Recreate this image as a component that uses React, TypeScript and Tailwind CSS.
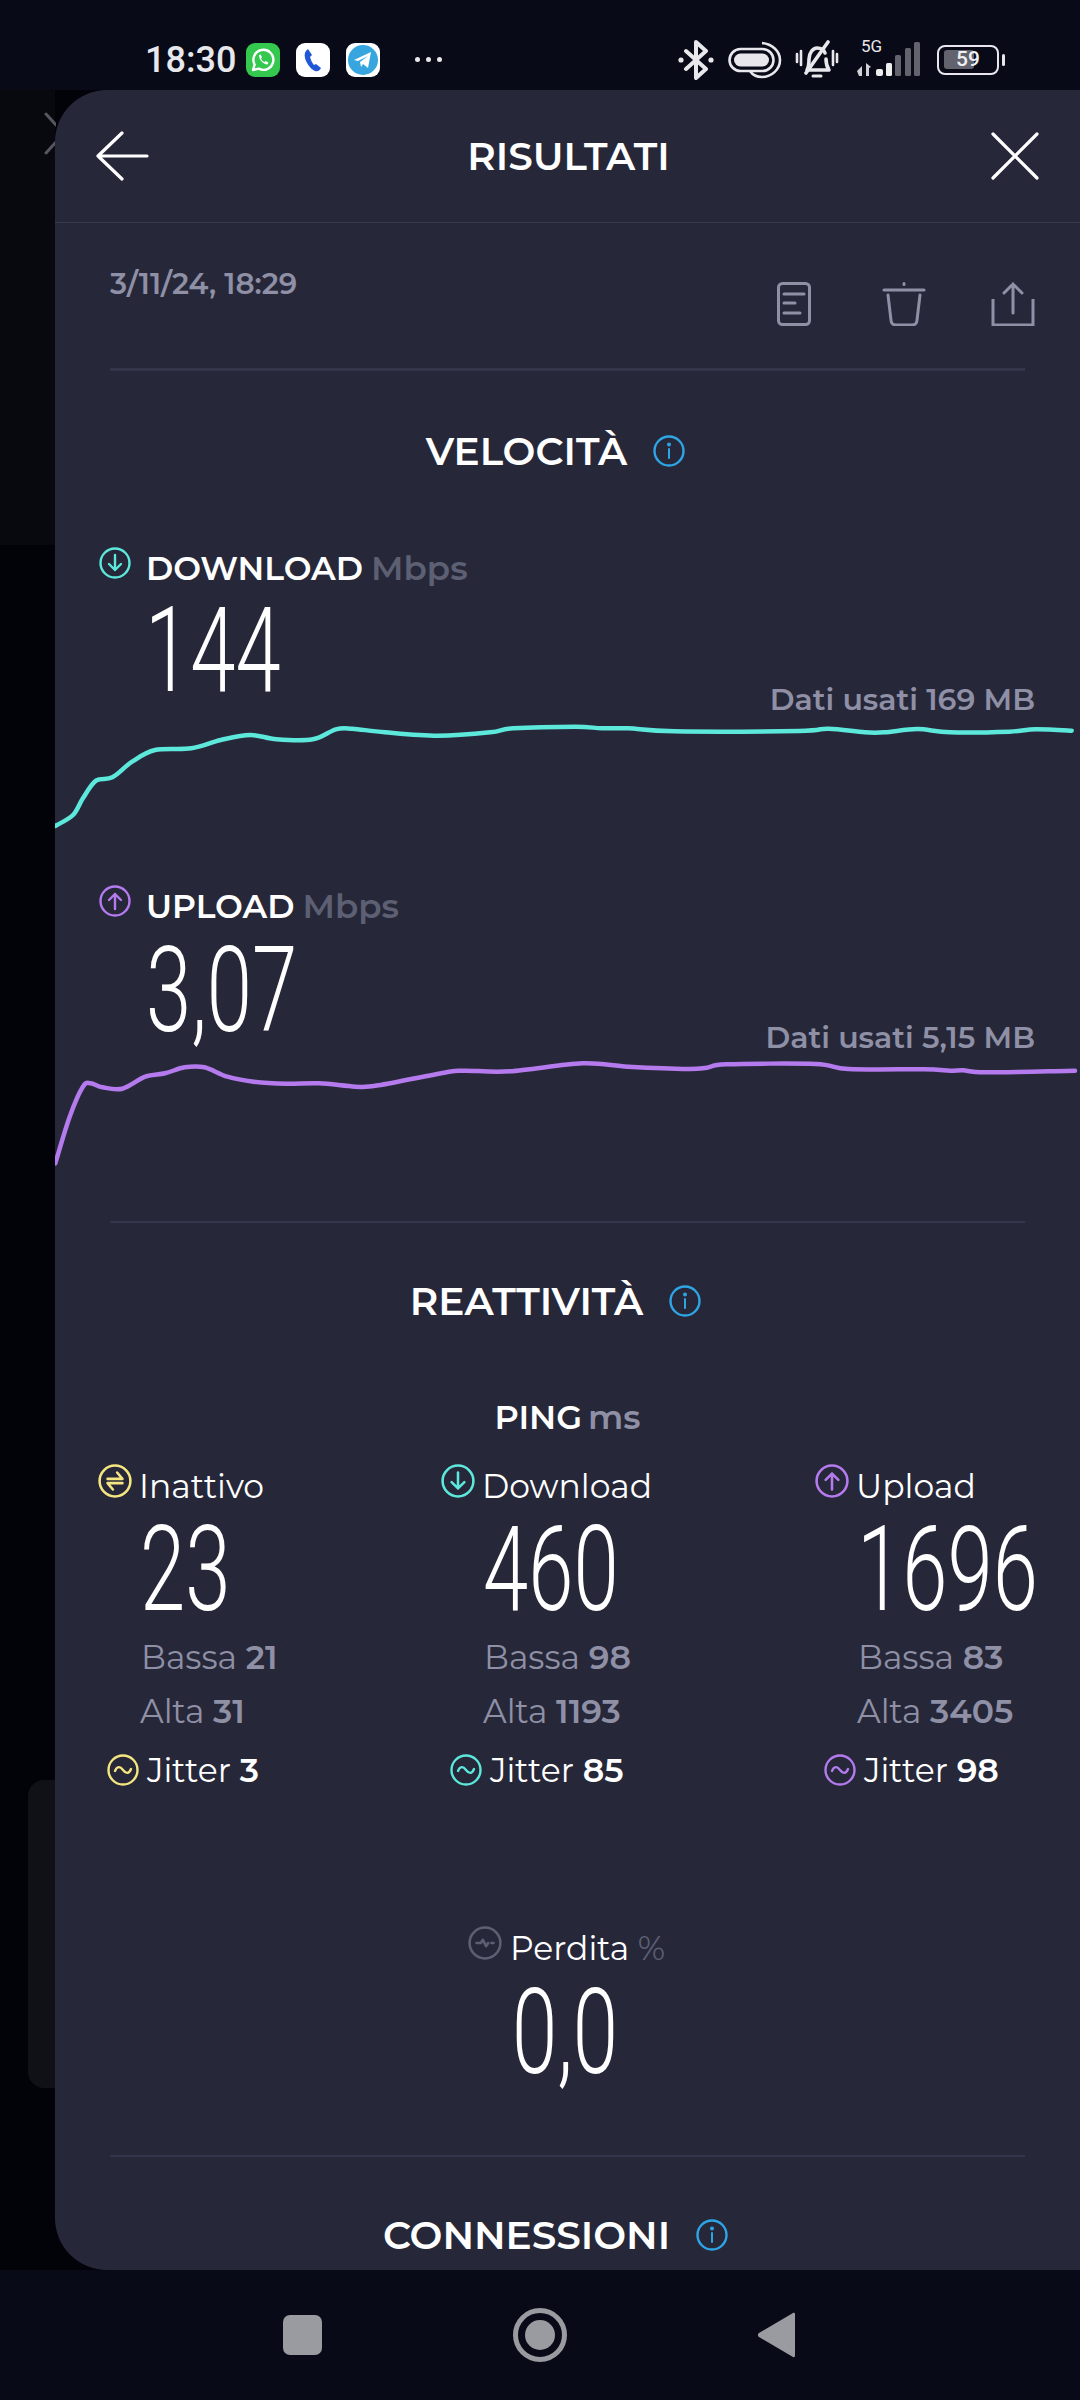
import React from "react";

const sans = "font-['Montserrat','Inter','Noto_Sans',sans-serif]";

function smooth(pts: number[][]) {
  let d = `M${pts[0][0]} ${pts[0][1]}`;
  for (let i = 0; i < pts.length - 1; i++) {
    const p0 = pts[Math.max(i - 1, 0)], p1 = pts[i], p2 = pts[i + 1], p3 = pts[Math.min(i + 2, pts.length - 1)];
    const c1x = p1[0] + (p2[0] - p0[0]) / 6, c1y = p1[1] + (p2[1] - p0[1]) / 6;
    const c2x = p2[0] - (p3[0] - p1[0]) / 6, c2y = p2[1] - (p3[1] - p1[1]) / 6;
    d += ` C${c1x.toFixed(1)} ${c1y.toFixed(1)} ${c2x.toFixed(1)} ${c2y.toFixed(1)} ${p2[0].toFixed(1)} ${p2[1].toFixed(1)}`;
  }
  return d;
}

const dlPts = [[8,858],[35,825],[50,775],[70,722],[95,712],[125,665],[160,630],[215,625],[260,600],[305,585],[345,598],[400,598],[435,568],[460,566],[510,577],[590,587],[670,577],[705,565],[800,560],[840,565],[880,565],[950,574],[1140,573],[1185,566],[1240,577],[1270,577],[1320,567],[1370,577],[1460,575],[1500,568],[1555,572]];
const ulPts = [[8,910],[30,770],[50,680],[62,670],[80,682],[110,686],[145,650],[175,640],[205,622],[235,622],[270,650],[310,665],[360,671],[410,670],[465,680],[500,676],[600,638],[630,632],[700,634],[810,610],[880,620],[970,627],[1000,623],[1030,613],[1165,612],[1215,627],[1330,628],[1370,632],[1390,631],[1425,637],[1560,632]];

function Curve({ pts, color, top, height }: { pts: number[][]; color: string; top: number; height: number }) {
  const mapped = pts.map(([x, y]) => [x / 1.522 - 5, y / 3 - top]);
  return (
    <svg width="1025" height={height} viewBox={`0 0 1025 ${height}`} className="block shrink-0">
      <path d={smooth(mapped)} fill="none" stroke={color} strokeWidth="4.5" strokeLinecap="round" />
    </svg>
  );
}

function CircleIcon({ color, kind, size = 32 }: { color: string; kind: "down" | "up" | "idle" | "wave" | "loss"; size?: number }) {
  return (
    <svg width={size} height={size} viewBox="0 0 32 32" fill="none" stroke={color} strokeWidth="2.4" strokeLinecap="round" strokeLinejoin="round" className="shrink-0">
      <circle cx="16" cy="16" r="14.5" />
      {kind === "down" && <path d="M16 8v15M10 17l6 6 6-6" />}
      {kind === "up" && <path d="M16 24V9M10 15l6-6 6 6" />}
      {kind === "idle" && <path d="M9 14h14l-5-6M23 18H9l5 6" />}
      {kind === "wave" && <path d="M8 17c2-5 5-5 8-1s6 4 8-1" />}
      {kind === "loss" && <path d="M8 16h4l2-3 3 6 2-3M22 16h2" />}
    </svg>
  );
}

function Info() {
  return (
    <svg width="32" height="32" viewBox="0 0 32 32" fill="none" stroke="#2ea6e6" strokeWidth="2.4" strokeLinecap="round" className="shrink-0">
      <circle cx="16" cy="16" r="14.5" />
      <path d="M16 14v9" strokeWidth="2" />
      <circle cx="16" cy="9.5" r="0.8" fill="#2ea6e6" />
    </svg>
  );
}

function Big({ children }: { children: React.ReactNode }) {
  return (
    <div className="h-[86px] w-[180px]">
      <div className="origin-top-left scale-x-[0.685] whitespace-nowrap font-['Roboto',sans-serif] font-light text-[119px] leading-[86px] text-white">
        {children}
      </div>
    </div>
  );
}

function SectionTitle({ children }: { children: React.ReactNode }) {
  return (
    <div className="flex h-[44px] shrink-0 items-center justify-center gap-[26px] pr-[24px]">
      <span className="text-[39px] font-semibold leading-[44px] text-white">{children}</span>
      <Info />
    </div>
  );
}

function Divider({ thick }: { thick?: boolean }) {
  return <div className={`mx-[55px] shrink-0 bg-[#33364a] ${thick ? "h-[3px]" : "h-[2px]"}`} />;
}

function SpeedHead({ color, kind, label }: { color: string; kind: "down" | "up"; label: string }) {
  return (
    <div className="flex h-[40px] shrink-0 items-start pl-[44px]">
      <CircleIcon color={color} kind={kind} size={32} />
      <span className="ml-[15px] mt-[2px] text-[33px] font-semibold leading-[38px] text-white">{label}</span>
      <span className="ml-[8px] mt-[2px] text-[34px] font-semibold leading-[38px] text-[#5d5f73]">Mbps</span>
    </div>
  );
}

function Used({ children }: { children: React.ReactNode }) {
  return (
    <div className="flex shrink-0 justify-end pr-[45px]">
      <span className="text-[30px] font-semibold leading-[34px] text-[#8f90a6]">{children}</span>
    </div>
  );
}

function PingCol({ color, kind, label, value, low, high, jitter, w }: { color: string; kind: "down" | "up" | "idle"; label: string; value: string; low: string; high: string; jitter: string; w: string }) {
  return (
    <div className={`flex flex-col ${w}`}>
      <div className="flex items-start gap-[7px]">
        <CircleIcon color={color} kind={kind} size={34} />
        <span className="mt-[3px] text-[33px] leading-[38px] text-white">{label}</span>
      </div>
      <div className="ml-[42px] mt-[22px]">
        <Big>{value}</Big>
      </div>
      <div className="ml-[43px] mt-[25px] whitespace-nowrap text-[33px] leading-[38px] text-[#8f90a6]">
        Bassa <b className="font-semibold">{low}</b>
      </div>
      <div className="ml-[42px] mt-[16px] whitespace-nowrap text-[33px] leading-[38px] text-[#8f90a6]">
        Alta <b className="font-semibold">{high}</b>
      </div>
      <div className="ml-[9px] mt-[21px] flex items-center gap-[8px]">
        <CircleIcon color={color} kind="wave" size={32} />
        <span className="whitespace-nowrap text-[33px] leading-[38px] text-white">
          Jitter <b className="font-semibold">{jitter}</b>
        </span>
      </div>
    </div>
  );
}

function StatusIcons() {
  return (
    <div className="flex items-center text-[#e8e8ec]">
      <svg width="36" height="40" viewBox="0 0 36 40" fill="none" stroke="currentColor" strokeWidth="4" strokeLinejoin="round" strokeLinecap="round">
        <path d="M8 11l20 18-10 9V2l10 9L8 29" />
        <circle cx="3" cy="20" r="2.6" fill="currentColor" stroke="none" />
        <circle cx="33" cy="20" r="2.6" fill="currentColor" stroke="none" />
      </svg>
      <svg width="54" height="38" viewBox="0 0 54 38" fill="none" className="ml-[14px]">
        <rect x="1.500" y="8" width="44" height="22" rx="11" stroke="currentColor" strokeWidth="2.600" />
        <rect x="6" y="12.500" width="35" height="13" rx="6.500" fill="currentColor" />
        <path d="M34 2c10 1 18 8 18 17s-8 17-18 17c-6 0-10-3-12-6" stroke="currentColor" strokeWidth="2.600" fill="none" />
      </svg>
      <svg width="44" height="40" viewBox="0 0 44 40" fill="none" stroke="currentColor" strokeWidth="3.600" strokeLinecap="round" strokeLinejoin="round" className="ml-[13px]">
        <path d="M12 30c2-3 2-6 2-11 0-6 4-11 8-11s7 2 8 5M31 19c0 5 1 8 3 11H12" />
        <path d="M11 33L33 2" />
        <path d="M18 36h8" strokeWidth="3" />
        <path d="M2 14v8M6 11v14M38 11v14M42 14v8" strokeWidth="2.600" />
      </svg>
      <div className="relative ml-[17px] h-[38px] w-[66px]">
        <span className="absolute left-[5px] top-[-4px] font-['Roboto',sans-serif] text-[17px] leading-[18px] text-[#e8e8ec]">5G</span>
        <svg width="66" height="38" viewBox="0 0 66 38" className="absolute left-0 top-0">
          <path d="M1 30l5-5v10H3zM10 22l5 4-2 1v8h-3z" fill="#d0d0d6" />
          <rect x="20" y="28" width="7" height="7" rx="2" fill="#eee" />
          <rect x="30" y="22" width="6" height="13" rx="1.500" fill="#eee" />
          <rect x="39" y="14" width="6" height="21" rx="1.500" fill="#62636d" />
          <rect x="49" y="7" width="6" height="28" rx="1.500" fill="#62636d" />
          <rect x="58" y="1" width="6" height="34" rx="1.500" fill="#62636d" />
        </svg>
      </div>
      <div className="ml-[15px] flex items-center gap-[3px]">
        <div className="relative flex h-[30px] w-[62px] items-center overflow-hidden rounded-[8px] border-[2.5px] border-[#e8e8ec] pl-[5px]">
          <div className="h-[19px] w-[30px] rounded-[3px] bg-[#62636d]" />
          <span className="absolute inset-0 flex items-center justify-center font-['Roboto',sans-serif] text-[21px] font-medium text-[#f0f0f4]">59</span>
        </div>
        <div className="h-[12px] w-[3px] rounded-sm bg-[#e8e8ec]" />
      </div>
    </div>
  );
}

export default function App() {
  return (
    <div className="flex h-[2400px] w-[1080px] flex-col overflow-hidden bg-[#080a18]">
      {/* status bar */}
      <div className="flex h-[90px] shrink-0 items-center justify-between pl-[145px] pr-[75px] pt-[29px]">
        <div className="flex items-center">
          <span className="font-['Roboto',sans-serif] text-[36px] font-medium leading-[40px] text-[#e8e8ec]">18:30</span>
          <div className="ml-[10px] flex h-[34px] w-[34px] items-center justify-center rounded-[9px] bg-[#35c84f]">
            <svg width="26" height="26" viewBox="0 0 26 26" fill="none" stroke="#fff" strokeWidth="2.400" strokeLinejoin="round">
              <path d="M3 23l1.600-5.400A10 10 0 1 1 8.600 21.600z" />
              <path d="M9 8c0 5 4 9 8.500 9.500l1-2-3-1.500-1 1c-1.500-.5-3-2-3.500-3.500l1-1-1.300-3z" fill="#fff" stroke="none" />
            </svg>
          </div>
          <div className="ml-[16px] flex h-[34px] w-[34px] items-center justify-center rounded-[9px] bg-white">
            <svg width="24" height="26" viewBox="0 0 24 26"><path d="M7 2c-3 2-4 5-3 9s5 11 10 13c3 1 5-1 6-3l-5-4-2 1c-2-2-3-5-4-8l2-2z" fill="#1f57d6" /></svg>
          </div>
          <div className="ml-[16px] flex h-[34px] w-[34px] items-center justify-center rounded-[9px] bg-white">
            <div className="flex h-[30px] w-[30px] items-center justify-center rounded-full bg-[#37a6de]">
              <svg width="20" height="20" viewBox="0 0 20 20"><path d="M1 10L18 2l-3 16-5-4-2 3-1-5 8-6-10 5z" fill="#fff" /></svg>
            </div>
          </div>
          <div className="ml-[35px] flex gap-[6px]">
            <i className="block h-[5px] w-[5px] rounded-full bg-[#e8e8ec]" />
            <i className="block h-[5px] w-[5px] rounded-full bg-[#e8e8ec]" />
            <i className="block h-[5px] w-[5px] rounded-full bg-[#e8e8ec]" />
          </div>
        </div>
        <StatusIcons />
      </div>

      {/* middle */}
      <div className="flex h-[2180px] shrink-0 bg-[#020308]">
        <div className="relative w-[55px] shrink-0">
          <div className="h-[455px] w-[55px] bg-[#08090f]" />
          <svg width="12" height="44" viewBox="0 0 12 44" className="absolute left-[44px] top-[22px]" fill="none" stroke="#555660" strokeWidth="3" strokeLinecap="round">
            <path d="M2 2l10 11M2 41l10-11" />
          </svg>
          <div className="absolute left-[28px] top-[1690px] h-[308px] w-[27px] rounded-l-[16px] bg-[#101116]" />
        </div>
        <div className={`${sans} relative flex flex-1 flex-col overflow-hidden rounded-l-[52px] bg-[#26283a]`}>
          {/* header */}
          <div className="flex h-[133px] shrink-0 items-center justify-between border-b border-[#383a4d] px-[40px]">
            <svg width="54" height="50" viewBox="0 0 54 50" fill="none" stroke="#fff" strokeWidth="3.200" strokeLinecap="round" strokeLinejoin="round">
              <path d="M27 2L3 25l24 23M3 25h49" />
            </svg>
            <span className="mr-[2px] text-[39px] font-semibold leading-[44px] text-white">RISULTATI</span>
            <svg width="50" height="50" viewBox="0 0 50 50" fill="none" stroke="#fff" strokeWidth="3.200" strokeLinecap="round">
              <path d="M3 3l44 44M47 3L3 47" />
            </svg>
          </div>

          {/* date + actions */}
          <div className="mx-[55px] flex h-[145px] shrink-0 items-start justify-between">
            <span className="mt-[43px] text-[29.3px] font-semibold leading-[36px] text-[#8f90a6]">3/11/24, 18:29</span>
            <div className="mr-[-10px] mt-[59px] flex items-center gap-[65px]">
              <svg width="34" height="44" viewBox="0 0 34 44" fill="none" stroke="#8f90a6" strokeWidth="3" strokeLinecap="round" className="mr-[6px]">
                <rect x="1.500" y="1.500" width="31" height="41" rx="4" />
                <path d="M7 12h20M7 21h11M7 31h16" />
              </svg>
              <svg width="44" height="44" viewBox="0 0 44 44" fill="none" stroke="#8f90a6" strokeWidth="3" strokeLinecap="round">
                <path d="M2 8h40M22 1.500v1" />
                <path d="M6 13l3 25c0 3 2 5 5 5h16c3 0 5-2 5-5l3-25" />
              </svg>
              <svg width="44" height="44" viewBox="0 0 44 44" fill="none" stroke="#8f90a6" strokeWidth="3" strokeLinecap="round">
                <path d="M22 31V2M13 11l9-9 9 9" />
                <path d="M2 17v26h40V17" strokeLinecap="butt" />
              </svg>
            </div>
          </div>
          <Divider thick />

          {/* velocita */}
          <div className="mt-[58px]"><SectionTitle>VELOCITÀ</SectionTitle></div>

          <div className="mt-[74px]">
            <SpeedHead color="#5de8dc" kind="down" label="DOWNLOAD" />
          </div>
          <div className="ml-[90px] mt-[21px] shrink-0"><Big>144</Big></div>
          <div className="-mt-[11px]"><Used>Dati usati 169 MB</Used></div>
          <div className="mt-[3px]"><Curve pts={dlPts} color="#5de8dc" top={180} height={120} /></div>

          <div className="mt-[45px]">
            <SpeedHead color="#b57bee" kind="up" label="UPLOAD" />
          </div>
          <div className="ml-[91px] mt-[23px] shrink-0"><Big>3,07</Big></div>
          <div className="-mt-[13px]"><Used>Dati usati 5,15 MB</Used></div>
          <div><Curve pts={ulPts} color="#b57bee" top={195} height={115} /></div>

          <div className="mt-[51px]"><Divider /></div>

          <div className="mt-[56px]"><SectionTitle>REATTIVITÀ</SectionTitle></div>

          <div className="mt-[75px] flex h-[38px] shrink-0 items-center justify-center gap-[6px]">
            <span className="text-[33.5px] font-semibold leading-[38px] text-white">PING</span>
            <span className="text-[33.5px] font-semibold leading-[38px] text-[#8f90a6]">ms</span>
          </div>

          <div className="mt-[28px] flex shrink-0 pl-[43px]">
            <PingCol w="w-[343px]" color="#f5e680" kind="idle" label="Inattivo" value="23" low="21" high="31" jitter="3" />
            <PingCol w="w-[374px]" color="#5de8dc" kind="down" label="Download" value="460" low="98" high="1193" jitter="85" />
            <PingCol w="w-[260px]" color="#b57bee" kind="up" label="Upload" value="1696" low="83" high="3405" jitter="98" />
          </div>

          <div className="mt-[137px] flex shrink-0 items-start gap-[8px] pl-[413px]">
            <CircleIcon color="#5d5f73" kind="loss" size={34} />
            <span className="mt-[3px] whitespace-nowrap text-[33px] leading-[38px] text-white">
              Perdita <span className="text-[#5d5f73]">%</span>
            </span>
          </div>
          <div className="ml-[457px] mt-[23px] shrink-0"><Big>0,0</Big></div>

          <div className="mt-[79px]"><Divider /></div>

          <div className="mt-[56px]"><SectionTitle>CONNESSIONI</SectionTitle></div>
        </div>
      </div>

      {/* nav */}
      <div className="flex h-[130px] shrink-0 items-center justify-center gap-[191px] bg-[#080a18] pr-[3px]">
        <div className="h-[40px] w-[39px] rounded-[7px] bg-[#9a9ba0]" />
        <div className="flex h-[54px] w-[54px] items-center justify-center rounded-full border-[5px] border-[#9a9ba0]">
          <div className="h-[30px] w-[30px] rounded-full bg-[#9a9ba0]" />
        </div>
        <svg width="37" height="46" viewBox="0 0 37 46">
          <path d="M35 1L1 21c-1.500 1-1.500 3 0 4l34 20c1 .5 2 0 2-1V2c0-1-1-1.500-2-1z" fill="#9a9ba0" />
        </svg>
      </div>
    </div>
  );
}
